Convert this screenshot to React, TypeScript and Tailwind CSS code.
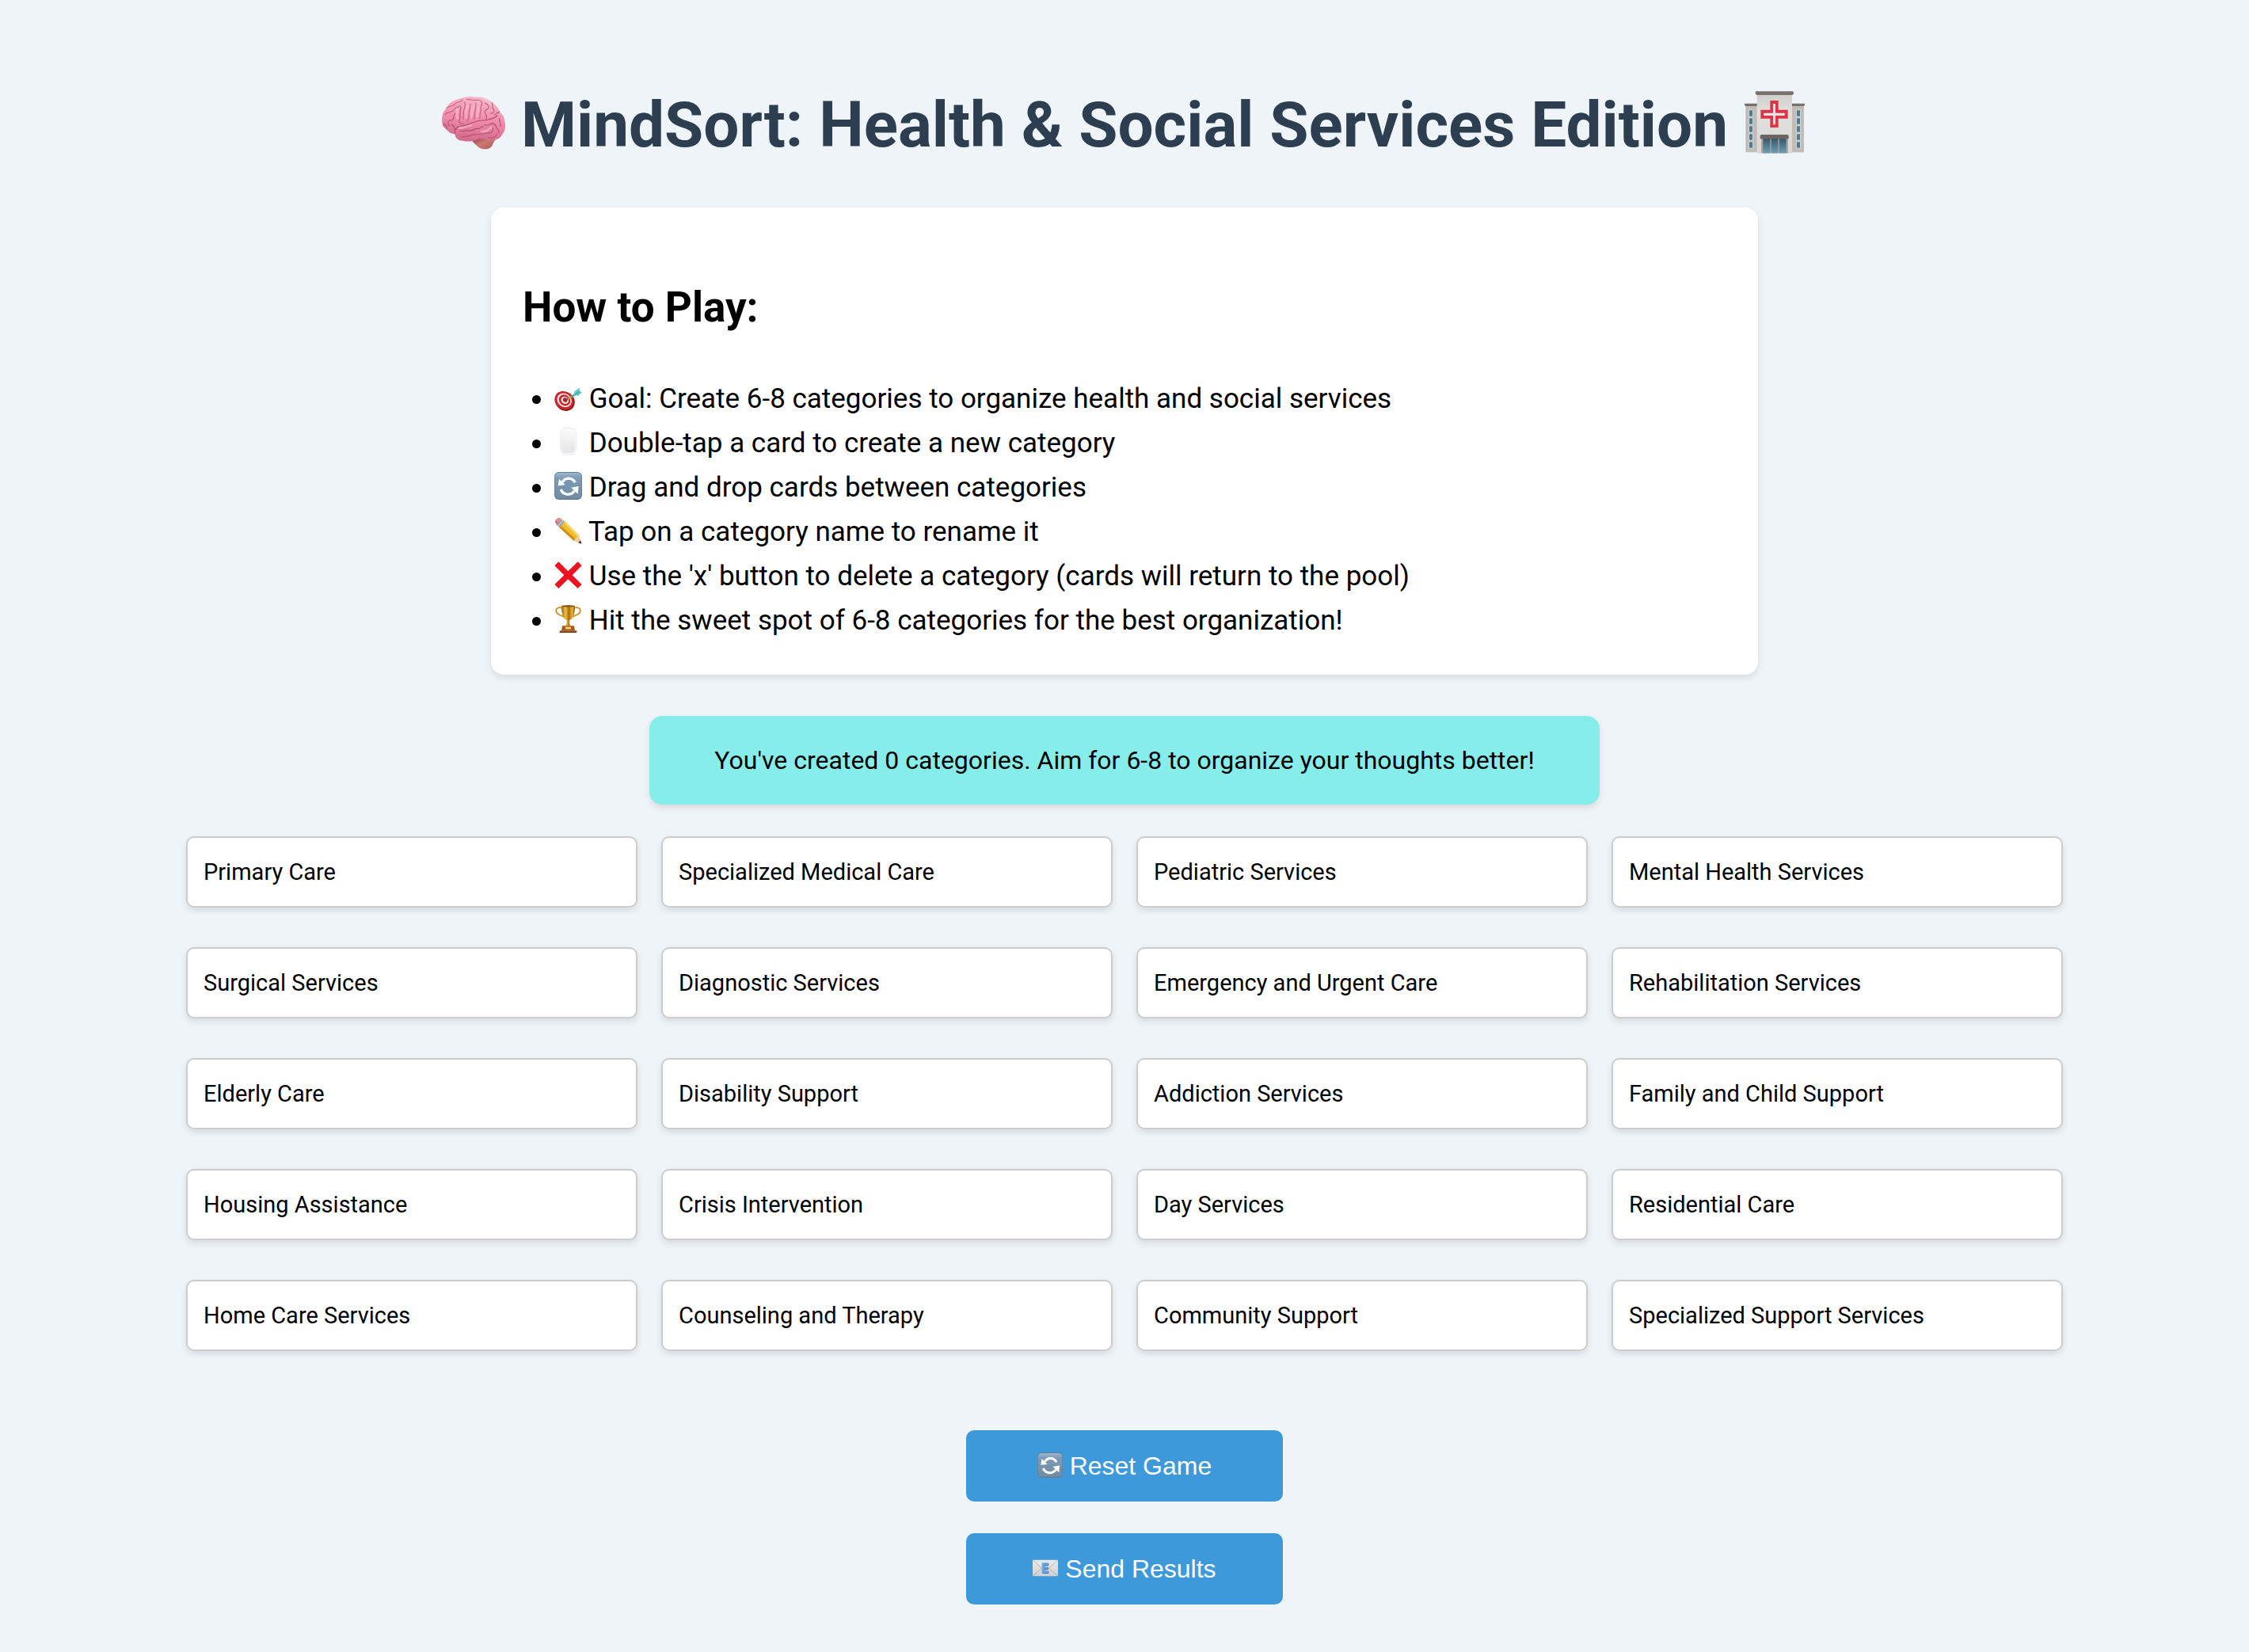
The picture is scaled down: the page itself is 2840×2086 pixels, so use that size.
import React, { useState } from "react";

type IconProps = { className: string };

function Brain({ className }: IconProps) {
  return (
    <svg viewBox="0 0 240 240" className={className} role="img" aria-label="Brain">
      <defs>
        <linearGradient id="brainFill" x1="0.6" y1="0" x2="0.4" y2="1">
          <stop offset="0" stopColor="#f6b8c9" />
          <stop offset="0.5" stopColor="#f08cab" />
          <stop offset="1" stopColor="#d0688a" />
        </linearGradient>
        <linearGradient id="brainStem" x1="0" y1="0" x2="1" y2="1">
          <stop offset="0" stopColor="#7d3a40" />
          <stop offset="0.5" stopColor="#cf7876" />
          <stop offset="1" stopColor="#a95556" />
        </linearGradient>
      </defs>
      <path d="M112 186 C124 198 134 214 154 219 C176 223 190 214 194 198 L204 182 L150 172 Z" fill="url(#brainStem)" />
      <path
        d="M1 118 C-1 96 4 76 18 64 C24 46 44 34 66 30 C84 20 112 19 132 23 C154 20 180 32 190 44 C206 52 214 64 218 78 C232 90 238 102 238 114 C243 130 240 152 230 162 C224 178 208 186 192 185 C168 186 150 178 136 182 C116 192 92 192 80 188 C62 188 48 176 50 162 C36 164 22 154 18 144 C6 140 1 130 1 118 Z"
        fill="url(#brainFill)"
      />
      <g fill="none" stroke="#fbccd8" strokeWidth="8" strokeLinecap="round" opacity="0.5">
        <path d="M97 58 C92 76 90 90 92 100" />
        <path d="M118 60 C113 78 112 90 112 100" />
        <path d="M60 66 C56 80 56 94 60 104" />
        <path d="M138 60 C138 72 134 84 134 96" />
        <path d="M160 30 C172 36 182 46 186 52" />
        <path d="M66 140 C80 140 96 132 112 128" />
        <path d="M150 152 C164 156 176 148 186 138" />
      </g>
      <g fill="none" stroke="#b54b70" strokeWidth="3.5" strokeLinecap="round" strokeLinejoin="round">
        <path d="M50 162 C46 144 58 134 74 132 C98 130 112 120 132 114 C150 108 164 114 176 108 C190 104 204 102 210 92" />
        <path d="M18 64 C30 54 44 60 50 48 C58 40 72 44 78 34" opacity="0.7" />
        <path d="M12 88 C24 74 36 86 46 70 C52 58 66 64 70 54" opacity="0.7" />
        <path d="M28 132 C18 122 24 108 38 110 C48 108 42 92 50 84" opacity="0.8" />
        <path d="M8 124 C16 130 22 140 18 144" />
        <path d="M38 126 C44 132 50 138 48 146" />
        <path d="M72 60 C66 80 72 94 66 110 C62 120 74 126 82 124" opacity="0.8" />
        <path d="M84 42 C92 50 88 58 84 70 C80 84 84 94 80 106" opacity="0.7" />
        <path d="M108 48 C108 64 102 76 102 92 C104 104 98 112 94 116" opacity="0.7" />
        <path d="M128 46 C132 56 126 66 126 76 C122 88 126 98 122 106" opacity="0.7" />
        <path d="M94 32 C110 28 116 38 132 34 C146 32 156 42 150 54 C144 64 150 72 146 82 C142 92 146 98 144 104" opacity="0.7" />
        <path d="M164 46 C176 50 182 60 174 68 C164 70 158 80 166 88 C174 94 166 102 168 108" opacity="0.8" />
        <path d="M190 44 C194 56 188 62 196 70 C202 78 192 86 184 84" opacity="0.8" />
        <path d="M218 78 C210 86 204 84 200 90" />
        <path d="M70 152 C84 154 92 146 104 150 C116 152 124 142 134 142 C146 144 148 134 156 134" />
        <path d="M76 172 C96 176 112 164 130 164 C150 166 158 158 174 160 C186 162 196 150 194 140" opacity="0.8" />
        <path d="M162 128 C172 132 180 126 188 124 C198 122 204 128 206 136 C208 146 218 148 216 158" />
        <path d="M218 104 C216 116 226 122 222 134" />
        <path d="M176 176 C192 180 206 174 208 162" opacity="0.8" />
      </g>
    </svg>
  );
}

function Hospital({ className }: IconProps) {
  const rows = [73, 103, 133, 163, 193];
  return (
    <svg viewBox="0 0 240 240" className={className} role="img" aria-label="Hospital">
      <defs>
        <linearGradient id="hospWall" x1="0" y1="0" x2="0" y2="1">
          <stop offset="0" stopColor="#cfcdca" />
          <stop offset="0.3" stopColor="#e2e0dd" />
          <stop offset="1" stopColor="#dad8d4" />
        </linearGradient>
        <linearGradient id="hospGlass" x1="0" y1="0" x2="0" y2="1">
          <stop offset="0" stopColor="#365869" />
          <stop offset="1" stopColor="#6f9db4" />
        </linearGradient>
      </defs>
      <path d="M7 54 H52 V232 H7 Z M180 54 H228 V232 H180 Z" fill="#c0bdb9" />
      <path d="M3 47 H52 V57 H7 L3 53 Z M180 47 H231 V53 L227 57 H180 Z" fill="#77716e" />
      {rows.map((y) => (
        <g key={y}>
          <rect x="18" y={y - 3} width="18" height="28" fill="#d6d4d0" />
          <rect x="21" y={y} width="12" height="22" fill="#4a7d94" />
          <rect x="198" y={y - 3} width="18" height="28" fill="#d6d4d0" />
          <rect x="201" y={y} width="12" height="22" fill="#4a7d94" />
        </g>
      ))}
      <rect x="50" y="10" width="133" height="226" fill="url(#hospWall)" />
      <path d="M46 1 H186 L189 5 V11 L184 15 H49 L44 10 V5 Z" fill="#77716e" />
      <path d="M100 36 H131 V71 H167 V104 H131 V138 H100 V104 H64 V71 H100 Z" fill="#dc3545" />
      <path d="M111 48 H120 V83 H155 V93 H120 V127 H111 V93 H75 V83 H111 Z" fill="#ebe7e4" />
      <rect x="66" y="180" width="102" height="55" fill="#a9a5a1" />
      <rect x="73" y="180" width="27" height="55" fill="url(#hospGlass)" />
      <rect x="104" y="180" width="26" height="55" fill="url(#hospGlass)" />
      <rect x="134" y="180" width="27" height="55" fill="url(#hospGlass)" />
      <path d="M66 165 H166 L170 169 V181 H62 V169 Z" fill="#6b6561" />
    </svg>
  );
}

function Target({ className }: IconProps) {
  return (
    <svg viewBox="0 0 105 105" className={className} role="img" aria-label="Target">
      <ellipse cx="40" cy="68" rx="39" ry="35" transform="rotate(40 40 68)" fill="#8f1219" />
      <ellipse cx="37" cy="65" rx="38" ry="33" transform="rotate(40 37 65)" fill="#d0242b" />
      <ellipse cx="38" cy="64" rx="29" ry="25" transform="rotate(40 38 64)" fill="#f6eeee" />
      <ellipse cx="39" cy="64" rx="23" ry="20" transform="rotate(40 39 64)" fill="#cf242b" />
      <ellipse cx="40" cy="64" rx="15" ry="13" transform="rotate(40 40 64)" fill="#f6eeee" />
      <ellipse cx="41" cy="63" rx="9" ry="8" transform="rotate(40 41 63)" fill="#c01d24" />
      <path d="M42 64 L58 54" stroke="#5c4b4b" strokeWidth="4" />
      <path d="M53 58 L72 46" stroke="#d9a531" strokeWidth="6" />
      <path d="M65 51 L84 38" stroke="#3da9ac" strokeWidth="7" />
      <path d="M73 45 L77 30 L96 17 L95 29 L105 34 L91 47 Z" fill="#63c9c9" />
      <path d="M77 44 L96 30" stroke="#2f8f95" strokeWidth="3" />
    </svg>
  );
}

function Mouse({ className }: IconProps) {
  return (
    <svg viewBox="0 0 105 105" className={className} role="img" aria-label="Computer mouse">
      <defs>
        <linearGradient id="mouseFill" x1="0" y1="0" x2="0" y2="1">
          <stop offset="0" stopColor="#fafafb" />
          <stop offset="1" stopColor="#e3e5e8" />
        </linearGradient>
      </defs>
      <rect x="23" y="1" width="60" height="102" rx="20" fill="#f8f8f9" stroke="#e2e3e5" strokeWidth="2" />
      <rect x="27" y="4" width="52" height="92" rx="16" fill="url(#mouseFill)" />
    </svg>
  );
}

function Refresh({ className }: IconProps) {
  return (
    <svg viewBox="0 0 105 105" className={className} role="img" aria-label="Refresh">
      <defs>
        <linearGradient id="refreshFill" x1="0" y1="0" x2="0" y2="1">
          <stop offset="0" stopColor="#9db7cd" />
          <stop offset="0.2" stopColor="#7d9bb6" />
          <stop offset="1" stopColor="#708ba4" />
        </linearGradient>
      </defs>
      <rect width="105" height="105" rx="17" fill="#5f7a94" />
      <rect x="2" y="3" width="101" height="98" rx="15" fill="url(#refreshFill)" />
      <g fill="none" stroke="#fff" strokeWidth="10">
        <path d="M30 40 C40 20 68 19 79 40" />
        <path d="M24 66 C34 88 62 91 76 72" />
      </g>
      <path d="M18 26 L14 52 L41 49 Z" fill="#fff" />
      <path d="M89 83 L92 54 L64 59 Z" fill="#fff" />
    </svg>
  );
}

function Pencil({ className }: IconProps) {
  return (
    <svg viewBox="0 0 105 105" className={className} role="img" aria-label="Pencil">
      <g transform="translate(0 3)">
        <path d="M3 17 C1 10 14 0 22 3 L34 14 L13 34 Z" fill="#e58f98" />
        <path d="M3 17 L13 34 L19 28 L8 14 Z" fill="#c96c78" />
        <path d="M27 8 L42 18 L22 43 L10 29 Z" fill="#9aa4ad" />
        <path d="M33 12 L14 34" stroke="#dfe4e8" strokeWidth="3" />
        <path d="M40 16 L94 70 L75 91 L20 40 Z" fill="#f5bd2c" />
        <path d="M26 34 L20 40 L75 91 L81 84 Z" fill="#cf8d18" />
        <path d="M40 16 L94 70 L90 75 L36 21 Z" fill="#fbd766" />
        <path d="M94 70 L103 101 L75 91 C74 84 78 82 82 83 C82 77 86 74 90 76 Z" fill="#f1cfa0" />
        <path d="M99 88 L103 101 L91 97 Z" fill="#38302d" />
      </g>
    </svg>
  );
}

function Cross({ className }: IconProps) {
  return (
    <svg viewBox="0 0 105 105" className={className} role="img" aria-label="Cross mark">
      <path
        d="M1 19 L16 4 L52 40 L89 4 L104 19 L68 55 L104 90 L89 105 L52 70 L16 105 L1 90 L37 55 Z"
        fill="#ee1320"
      />
    </svg>
  );
}

function Trophy({ className }: IconProps) {
  return (
    <svg viewBox="0 0 105 105" className={className} role="img" aria-label="Trophy">
      <defs>
        <linearGradient id="cupFill" x1="0" y1="0" x2="1" y2="0">
          <stop offset="0" stopColor="#9a5f0c" />
          <stop offset="0.3" stopColor="#f2c144" />
          <stop offset="0.55" stopColor="#a96c10" />
          <stop offset="0.8" stopColor="#eab53a" />
          <stop offset="1" stopColor="#8f560a" />
        </linearGradient>
      </defs>
      <g fill="none" stroke="#c98f22" strokeWidth="5">
        <path d="M31 12 C18 6 4 12 7 24 C10 38 28 38 38 46" />
        <path d="M74 12 C87 6 101 12 98 24 C95 38 77 38 67 46" />
      </g>
      <path d="M27 3 H78 C78 30 74 50 59 57 H46 C31 50 27 30 27 3 Z" fill="url(#cupFill)" />
      <ellipse cx="52.5" cy="4" rx="26" ry="4" fill="#8b5a10" />
      <path d="M47 56 H58 C57 66 58 74 64 80 H41 C47 74 48 66 47 56 Z" fill="url(#cupFill)" />
      <path d="M30 79 H75 L78 97 H27 Z" fill="#ac5a1c" />
      <rect x="42" y="83" width="21" height="8" fill="#f3d57a" />
      <path d="M20 97 H85 V105 H20 Z" fill="#8a4312" />
    </svg>
  );
}

function Email({ className }: IconProps) {
  return (
    <svg viewBox="0 0 96 96" className={className} role="img" aria-label="E-mail">
      <defs>
        <linearGradient id="mailFill" x1="0" y1="0" x2="0" y2="1">
          <stop offset="0" stopColor="#ececec" />
          <stop offset="1" stopColor="#cfcfd1" />
        </linearGradient>
      </defs>
      <rect x="0" y="17" width="96" height="62" rx="2" fill="url(#mailFill)" />
      <path d="M1 18 L40 54 H56 L95 18" fill="#e6e6e6" stroke="#97979a" strokeWidth="2" />
      <path d="M2 77 L34 49 M94 77 L62 49" stroke="#a9a9ac" strokeWidth="2" />
      <path d="M37 30 H61 V39 H47 V44 H60 V53 H47 V59 H61 V69 H37 Z" fill="#3a6fae" />
      <path d="M35 28 H59 V36 H45 V43 H58 V50 H45 V58 H59 V66 H35 Z" fill="#69a5e6" />
    </svg>
  );
}

const steps: { Icon: (p: IconProps) => React.JSX.Element; text: string }[] = [
  { Icon: Target, text: "Goal: Create 6-8 categories to organize health and social services" },
  { Icon: Mouse, text: "Double-tap a card to create a new category" },
  { Icon: Refresh, text: "Drag and drop cards between categories" },
  { Icon: Pencil, text: "Tap on a category name to rename it" },
  { Icon: Cross, text: "Use the 'x' button to delete a category (cards will return to the pool)" },
  { Icon: Trophy, text: "Hit the sweet spot of 6-8 categories for the best organization!" },
];

const services = [
  "Primary Care",
  "Specialized Medical Care",
  "Pediatric Services",
  "Mental Health Services",
  "Surgical Services",
  "Diagnostic Services",
  "Emergency and Urgent Care",
  "Rehabilitation Services",
  "Elderly Care",
  "Disability Support",
  "Addiction Services",
  "Family and Child Support",
  "Housing Assistance",
  "Crisis Intervention",
  "Day Services",
  "Residential Care",
  "Home Care Services",
  "Counseling and Therapy",
  "Community Support",
  "Specialized Support Services",
];

const buttonClass =
  "h-[90px] w-[400px] cursor-pointer rounded-[10px] bg-[#3d99da] font-['Liberation_Sans',Arial,sans-serif] text-[32px] leading-[50px] text-white";
const buttonIcon = "inline-block size-8 align-[-4px]";

export default function App() {
  const [categories, setCategories] = useState(0);

  return (
    <main className="flex min-h-screen flex-col items-center bg-[#eff4f8] px-10 pt-[94px] pb-[60px] font-[Roboto,sans-serif] text-black">
      <h1 className="mb-10 text-center text-[80px] leading-[128px] font-bold text-[#2c3e50]">
        <Brain className="inline-block size-20 align-[-10px]" /> MindSort: Health &amp; Social Services Edition{" "}
        <Hospital className="inline-block size-20 align-[-10px]" />
      </h1>

      <section className="w-full max-w-[1600px] rounded-2xl bg-white p-10 shadow-[0_4px_8px_rgba(0,0,0,0.1)]">
        <h2 className="mt-11 mb-[46px] text-[53px] leading-[84px] font-bold">How to Play:</h2>
        <ul className="list-disc pl-10 text-[35px] leading-[56px]">
          {steps.map(({ Icon, text }) => (
            <li key={text}>
              <Icon className="inline-block size-[35px] align-[-4px]" /> {text}
            </li>
          ))}
        </ul>
      </section>

      <p
        role="status"
        className="mt-[52px] w-full max-w-[1200px] rounded-2xl bg-[#87edea] px-10 py-[30px] text-center text-[32px] leading-[52px] shadow-[0_4px_8px_rgba(0,0,0,0.1)]"
      >
        You've created {categories} categories. Aim for 6-8 to organize your thoughts better!
      </p>

      <ul className="mt-10 grid w-full max-w-[2370px] grid-cols-4 gap-x-[30px] gap-y-[50px]">
        {services.map((name) => (
          <li
            key={name}
            draggable
            onDoubleClick={() => setCategories((n) => n + 1)}
            className="cursor-move rounded-[10px] border-2 border-[#cccccc] bg-white p-5 text-[29px] leading-[46px] shadow-[0_4px_8px_rgba(0,0,0,0.1)]"
          >
            {name}
          </li>
        ))}
      </ul>

      <div className="mt-[100px] flex flex-col gap-10">
        <button type="button" className={buttonClass} onClick={() => setCategories(0)}>
          <Refresh className={buttonIcon} /> Reset Game
        </button>
        <button type="button" className={buttonClass}>
          <Email className={buttonIcon} /> Send Results
        </button>
      </div>
    </main>
  );
}
